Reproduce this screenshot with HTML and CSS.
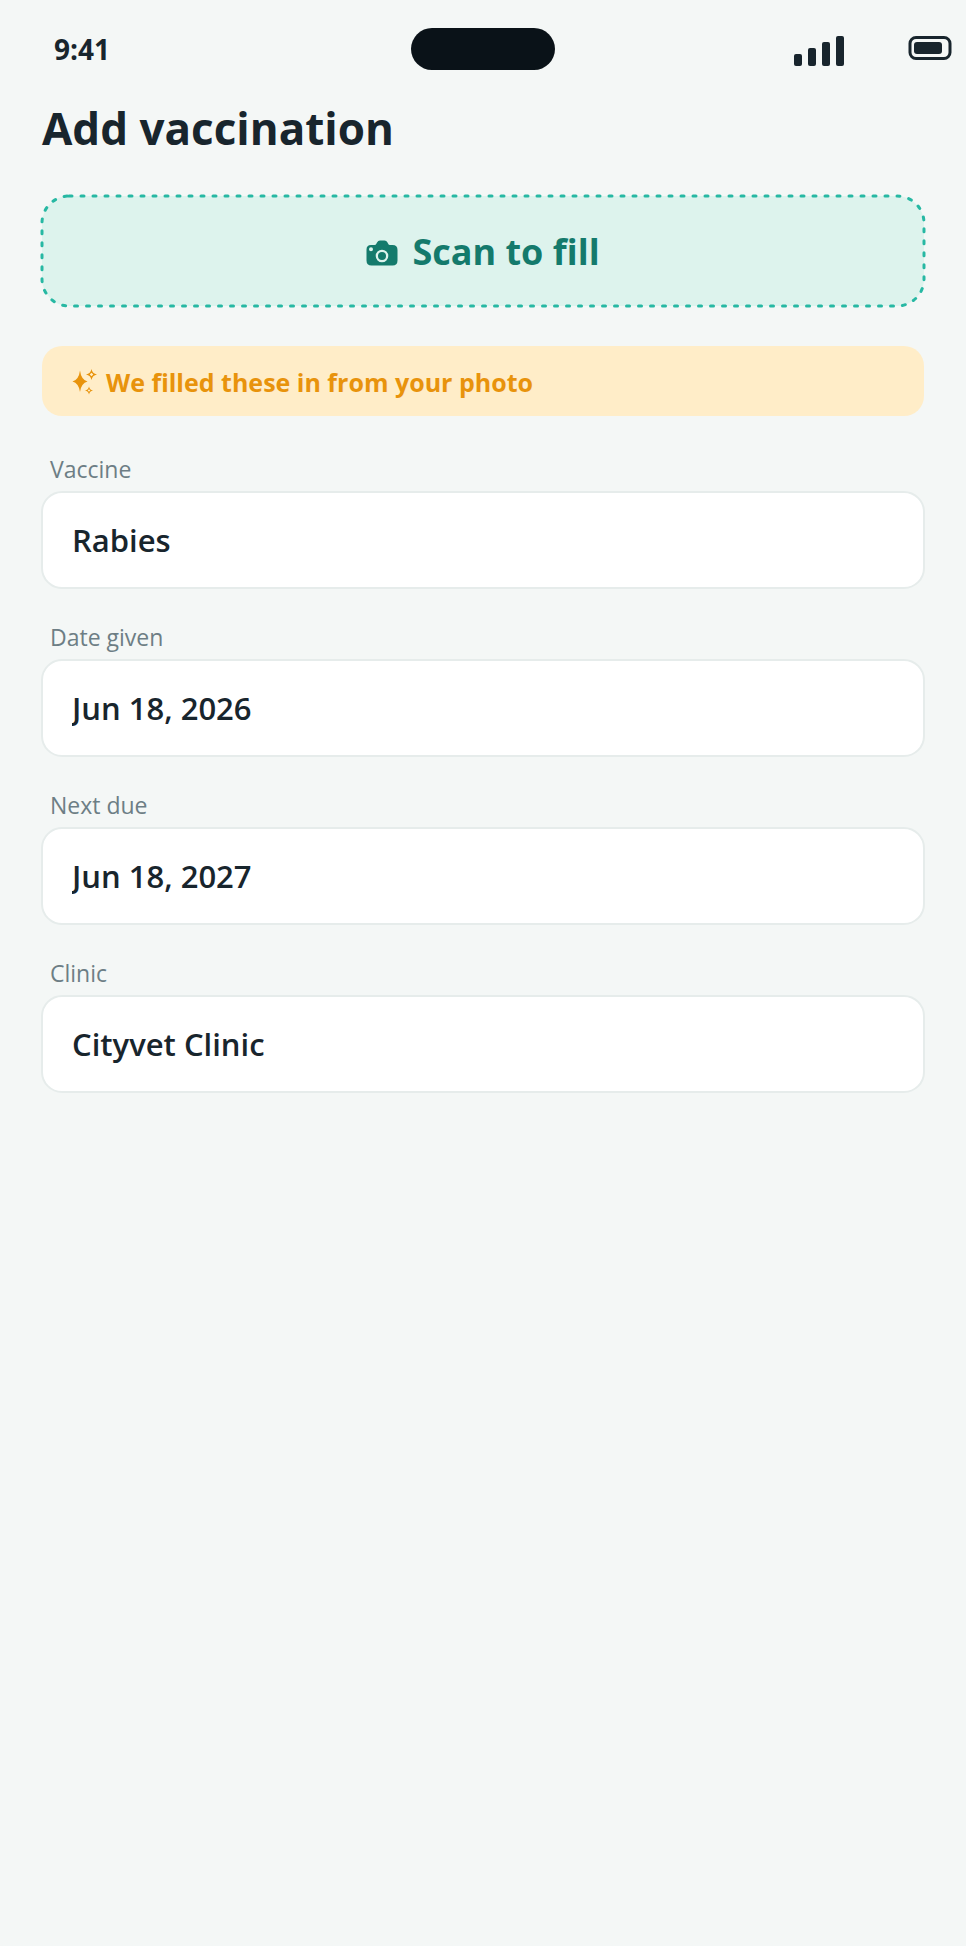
FILE: index.html
```html
<!DOCTYPE html>
<html lang="en">
<head>
  <meta charset="UTF-8">
  <meta name="viewport" content="width=device-width, initial-scale=1.0">
  <title>Add vaccination</title>
  <link rel="stylesheet" href="styles.css">
</head>
<body>

  <header class="status-bar">
    <span class="time">9:41</span>
    <span class="island"></span>
    <div class="status-icons">
      <svg class="signal" viewBox="0 0 50 30" aria-hidden="true">
        <rect x="0" y="18" width="8" height="12" rx="2"/>
        <rect x="14" y="12" width="8" height="18" rx="2"/>
        <rect x="28" y="6" width="8" height="24" rx="2"/>
        <rect x="42" y="0" width="8" height="30" rx="2"/>
      </svg>
      <svg class="battery" viewBox="0 0 44 24" aria-hidden="true">
        <rect class="battery-case" x="2" y="1.5" width="40" height="21" rx="6"/>
        <rect x="6" y="6" width="28" height="12" rx="3"/>
      </svg>
    </div>
  </header>

  <main class="container">
    <h1>Add vaccination</h1>

    <button type="button" class="scan-button">
      <svg class="scan-outline" aria-hidden="true"><rect width="100%" height="100%" rx="27"/></svg>
      <svg class="camera" viewBox="0 0 32 26" aria-hidden="true">
        <path fill-rule="evenodd" d="M5 5H8.500Q9.800 5 10.500 3.500L11 2.500Q12 .5 14 .5H18.500Q20.500 .5 21.500 2.500L22 3.500Q22.700 5 24 5H26.500Q31.500 5 31.500 10V20.500Q31.500 25.500 26.500 25.500H5.500Q.5 25.500 .5 20.500V9.500Q.5 5 5 5ZM5 7.300A2 2 0 1 0 5 11.300A2 2 0 1 0 5 7.300ZM16 9.700A6.300 6.300 0 1 0 16 22.300A6.300 6.300 0 1 0 16 9.700Z"/>
        <circle cx="16" cy="16" r="4"/>
      </svg>
      <span>Scan to fill</span>
    </button>

    <p class="notice">
      <svg class="sparkles" viewBox="0 0 26 26" aria-hidden="true">
        <path d="M8 1.500Q9.200 10.800 15.500 12.500Q9.200 14.200 8 23Q6.800 14.200 .5 12.500Q6.800 10.800 8 1.500Z"/>
        <path fill-rule="evenodd" d="M19.500 0Q20.300 4.700 25 5.500Q20.300 6.300 19.500 11Q18.700 6.300 14 5.500Q18.700 4.700 19.500 0ZM19.500 3.700L17.700 5.500L19.500 7.300L21.300 5.500Z"/>
        <path fill-rule="evenodd" d="M17 17.500Q17.600 20.900 21 21.500Q17.600 22.100 17 25.500Q16.400 22.100 13 21.500Q16.400 20.900 17 17.500ZM17 20.200L15.700 21.500L17 22.800L18.300 21.500Z"/>
      </svg>
      <span>We filled these in from your photo</span>
    </p>

    <form>
      <div class="form-group">
        <label for="vaccine">Vaccine</label>
        <input type="text" id="vaccine" value="Rabies">
      </div>

      <div class="form-group">
        <label for="dateGiven">Date given</label>
        <input type="text" id="dateGiven" value="Jun 18, 2026">
      </div>

      <div class="form-group">
        <label for="nextDue">Next due</label>
        <input type="text" id="nextDue" value="Jun 18, 2027">
      </div>

      <div class="form-group">
        <label for="clinic">Clinic</label>
        <input type="text" id="clinic" value="Cityvet Clinic">
      </div>
    </form>
  </main>

</body>
</html>
```
FILE: styles.css
```css
* {
  box-sizing: border-box;
}

body {
  margin: 0;
  min-height: 100vh;
  background-color: #f4f7f6;
  color: #18252d;
  font-family: "Open Sans", "Noto Sans", sans-serif;
}

.status-bar {
  display: grid;
  grid-template-columns: 1fr 144px 1fr;
  align-items: center;
  height: 98px;
}

.time {
  padding-left: 54px;
  font-size: 28px;
  font-weight: 700;
}

.island {
  height: 42px;
  border-radius: 21px;
  background-color: #0a1218;
}

.status-icons {
  display: flex;
  align-items: flex-start;
  justify-content: flex-end;
  gap: 64px;
  padding: 4px 14px 0 0;
}

.status-icons svg {
  fill: #18252d;
}

.signal {
  width: 50px;
  height: 30px;
}

.battery {
  width: 44px;
  height: 24px;
}

.battery .battery-case {
  fill: none;
  stroke: #18252d;
  stroke-width: 3;
}

.container {
  padding: 0 41px;
}

h1 {
  margin: 0;
  padding: 0 1px;
  font-size: 44px;
  line-height: 60px;
  font-weight: 700;
}

.scan-button {
  position: relative;
  display: flex;
  align-items: center;
  justify-content: center;
  gap: 14px;
  width: calc(100% - 2px);
  height: 110px;
  margin: 38px 1px 40px;
  padding: 0;
  border: none;
  border-radius: 27px;
  background-color: #ddf3ed;
  color: #147a6c;
  font-family: inherit;
  font-size: 36px;
  font-weight: 700;
  cursor: pointer;
}

.scan-outline {
  position: absolute;
  inset: 0;
  width: 100%;
  height: 100%;
  overflow: visible;
  fill: none;
  stroke: #27b8a3;
  stroke-width: 3;
  stroke-linecap: round;
  stroke-dasharray: 3 9;
}

.camera {
  width: 32px;
  height: 26px;
  margin-top: 4px;
  fill: #147a6c;
}

.notice {
  display: flex;
  align-items: center;
  gap: 8px;
  height: 70px;
  margin: 0 1px 35px;
  padding: 2px 30px 0;
  border-radius: 20px;
  background-color: #ffedc8;
  color: #e8930c;
  font-size: 25px;
  font-weight: 700;
}

.sparkles {
  width: 26px;
  height: 26px;
  fill: #e8930c;
}

.form-group {
  margin-bottom: 30px;
}

.form-group label {
  display: block;
  padding: 0 9px;
  margin-bottom: 4px;
  color: #6d7e85;
  font-size: 23px;
  line-height: 36px;
}

.form-group input {
  display: block;
  width: 100%;
  height: 98px;
  padding: 0 29px;
  border: 2px solid #e6eceb;
  border-radius: 21px;
  background-color: #fff;
  color: #18252d;
  font-family: inherit;
  font-size: 31px;
  font-weight: 600;
}
```
